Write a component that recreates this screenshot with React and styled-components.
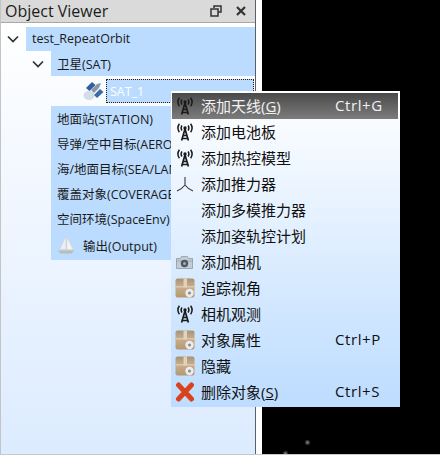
import React from "react"
import styled, { createGlobalStyle } from "styled-components"

const GlobalStyle = createGlobalStyle`
  html, body {
    margin: 0;
    padding: 0;
    background: #000;
  }
`

const FONT = `"Open Sans", "Noto Sans CJK SC", sans-serif`

const Page = styled.div`
  position: relative;
  display: flex;
  width: 440px;
  height: 455px;
  overflow: hidden;
  font-family: ${FONT};
  border-bottom: 1px solid #c8c8c8;
  box-sizing: border-box;
`

const Panel = styled.div`
  display: flex;
  flex-direction: column;
  width: 255px;
  border-left: 1px solid #c4c4c4;
  box-sizing: border-box;
`

const TitleBar = styled.div`
  display: flex;
  align-items: center;
  height: 23px;
  padding: 0 8px 0 4px;
  background: #dadada;
  border-bottom: 1px solid #a8a8a8;
  box-sizing: border-box;
`

const Title = styled.span`
  flex: 1;
  font-size: 16px;
  color: #1c1c1c;
`

const TitleButton = styled.svg`
  width: 12px;
  height: 12px;
  margin-left: 13px;
`

const Tree = styled.div`
  flex: 1;
  padding-top: 4px;
  background: linear-gradient(#ffffff, #dcebff);
`

const Row = styled.div`
  display: flex;
  align-items: center;
  height: ${(p) => p.$h || 25}px;
  margin-left: ${(p) => p.$indent}px;
  padding: 0 0 1px 6px;
  box-sizing: border-box;
  background: #bbdcff;
  font-size: 12.5px;
  color: #1a1a1a;
  white-space: nowrap;
`

const RowLabel = styled.span`
  margin-left: 8px;
`

const Chevron = styled.svg`
  position: absolute;
  left: ${(p) => p.$x}px;
  top: ${(p) => p.$y}px;
  width: 12px;
  height: 8px;
`

const SatRow = styled.div`
  display: flex;
  align-items: center;
  height: 30px;
  margin-left: 82px;
`

const SatLabel = styled.div`
  display: flex;
  align-items: center;
  width: 148px;
  height: 24px;
  margin-left: 2px;
  padding-left: 3px;
  border: 1px dotted #222;
  box-sizing: border-box;
  background: #bbdcff;
  color: #fff;
  font-size: 12.5px;
`

const Gap = styled.div`
  width: 7px;
  background: #fff;
  border-left: 1px solid #5a6068;
  box-sizing: border-box;
`

const Space = styled.div`
  position: relative;
  flex: 1;
  background: #000;
`

const Star = styled.div`
  position: absolute;
  left: ${(p) => p.$x - 3}px;
  top: ${(p) => p.$y - 3}px;
  width: 7px;
  height: 7px;
  background: radial-gradient(circle, #8e8e8e 0, #444 30%, transparent 65%);
`

const Menu = styled.div`
  position: absolute;
  left: 171px;
  top: 91px;
  width: 229px;
  height: 316px;
  padding: 2px 2px 2px 1px;
  box-sizing: border-box;
  background: linear-gradient(#ffffff, #bddcff);
`

const Item = styled.div`
  display: flex;
  align-items: center;
  height: 26px;
  color: ${(p) => (p.$active ? "#f2f2f2" : "#101010")};
  background: ${(p) => (p.$active ? "linear-gradient(#4a4a4a, #7c7c7c)" : "none")};
  font-size: 15px;
  white-space: nowrap;
`

const ItemIcon = styled.div`
  display: flex;
  align-items: center;
  justify-content: center;
  width: 29px;
  padding-right: 4px;
  box-sizing: border-box;
  flex: none;
`

const ItemLabel = styled.span`
  flex: 1;
  padding-bottom: 2px;
`

const Shortcut = styled.span`
  width: 63px;
  flex: none;
  padding-bottom: 2px;
  letter-spacing: 0.6px;
`

const Antenna = () => (
  <svg width="16" height="18" viewBox="0 0 16 18" fill="none" stroke="#1a1a1a" strokeWidth="1.5">
    <path d="M5 2.5 Q3.2 5 5 7.5M11 2.5 Q12.8 5 11 7.5M2.4 0.8 Q-0.6 5 2.4 9.2M13.6 0.8 Q16.6 5 13.6 9.2" />
    <circle cx="8" cy="5" r="1.7" fill="#1a1a1a" stroke="none" />
    <path d="M8 6 L4.6 17.5 M8 6 L11.4 17.5 M6 12.5 H10 M5.2 15.5 H10.8" strokeWidth="1.7" />
  </svg>
)

const Thruster = () => (
  <svg width="18" height="16" viewBox="0 0 18 16" fill="none" stroke="#3a3a3a" strokeWidth="1.1">
    <path d="M9 1 V9 M9 9 Q6 13 1 15 M9 9 Q12 13 17 15" />
  </svg>
)

const Camera = () => (
  <svg width="17" height="13" viewBox="0 0 17 13">
    <path d="M0.5 2.5 H4.5 L5.5 0.5 H11.5 L12.5 2.5 H16.5 V12.5 H0.5 Z" fill="#c4ccd6" stroke="#8f98a4" strokeWidth="0.8" />
    <path d="M0.5 5 H16.5" stroke="#8f98a4" strokeWidth="0.7" />
    <circle cx="8.5" cy="7.5" r="3.7" fill="#4e5661" />
    <circle cx="8.5" cy="7.5" r="1.5" fill="#a5adb8" />
  </svg>
)

const Box = () => (
  <svg width="20" height="20" viewBox="0 0 20 20">
    <defs>
      <linearGradient id="boxFill" x1="0" y1="0" x2="0" y2="1">
        <stop offset="0" stopColor="#a89378" />
        <stop offset="0.45" stopColor="#c9ae8c" />
        <stop offset="1" stopColor="#b29872" />
      </linearGradient>
    </defs>
    <rect x="0.5" y="0.5" width="19" height="19" rx="2" fill="url(#boxFill)" />
    <path d="M0.5 8 H19.5 V9.5 H0.5Z" fill="#dcc9ac" />
    <rect x="8.5" y="0.5" width="3.5" height="9" fill="#e0d2bc" />
    <circle cx="14.5" cy="15" r="4.2" fill="#ececec" />
    <circle cx="14.5" cy="15" r="1.6" fill="#8f8f8f" />
  </svg>
)

const DeleteX = () => (
  <svg width="20" height="20" viewBox="0 0 20 20" fill="none" stroke="#d8431b" strokeWidth="5" strokeLinecap="round">
    <path d="M3.5 3 L16.5 17 M16.5 3 L3.5 17" />
  </svg>
)

const Satellite = () => (
  <svg width="21" height="20" viewBox="0 0 21 20">
    <ellipse cx="6" cy="14.5" rx="5.5" ry="4.5" fill="#d3deeb" />
    <path d="M3 7 L9 1 L12.5 4 L6.5 10 Z" fill="#2f5f9e" />
    <path d="M11 14 L17 8 L20.5 11 L14 17 Z" fill="#3a6ba8" />
    <path d="M8 9 L14 3 L18 2 L16 7 L11 12 Z" fill="#8a97a6" />
  </svg>
)

const Sail = () => (
  <svg width="18" height="20" viewBox="0 0 18 20">
    <path d="M9 1 L9 14.5 L2.5 14.5 Z" fill="#eceef1" stroke="#c9cdd3" strokeWidth="0.5" />
    <path d="M10 2 L16 14.5 L10 14.5 Z" fill="#f6f4ec" stroke="#d4d3cb" strokeWidth="0.5" />
    <path d="M0.5 15.5 H17.5 L14.5 18.5 H3.5 Z" fill="#bcbcb6" />
  </svg>
)

const ChevronIcon = ({ x, y }) => (
  <Chevron $x={x} $y={y} viewBox="0 0 12 8" fill="none" stroke="#303030" strokeWidth="1.7">
    <path d="M1 1.5 L6 6.5 L11 1.5" />
  </Chevron>
)

const items = [
  { icon: <Antenna />, label: <>添加天线(<u>G</u>)</>, key: "Ctrl+G", active: true },
  { icon: <Antenna />, label: "添加电池板" },
  { icon: <Antenna />, label: "添加热控模型" },
  { icon: <Thruster />, label: "添加推力器" },
  { label: "添加多模推力器" },
  { label: "添加姿轨控计划" },
  { icon: <Camera />, label: "添加相机" },
  { icon: <Box />, label: "追踪视角" },
  { icon: <Antenna />, label: "相机观测" },
  { icon: <Box />, label: "对象属性", key: "Ctrl+P" },
  { icon: <Box />, label: "隐藏" },
  { icon: <DeleteX />, label: <>删除对象(<u>S</u>)</>, key: "Ctrl+S" },
]

const stars = [
  { x: 307, y: 442 },
  { x: 285, y: 453 },
]

export default function App() {
  return (
    <Page>
      <GlobalStyle />
      <Panel>
        <TitleBar>
          <Title>Object Viewer</Title>
          <TitleButton viewBox="0 0 12 12" fill="none" stroke="#333" strokeWidth="1.5">
            <path d="M4 3 V1 H11 V7 H8.5 M1 4 H8 V11 H1 Z" />
          </TitleButton>
          <TitleButton viewBox="0 0 12 12" fill="none" stroke="#333" strokeWidth="2.2">
            <path d="M2 2 L10 10 M10 2 L2 10" />
          </TitleButton>
        </TitleBar>
        <Tree>
          <Row $indent={25} $h={24}>test_RepeatOrbit</Row>
          <Row $indent={50}>卫星(SAT)</Row>
          <SatRow>
            <Satellite />
            <SatLabel>SAT_1</SatLabel>
          </SatRow>
          <Row $indent={50}>地面站(STATION)</Row>
          <Row $indent={50}>导弹/空中目标(AERO</Row>
          <Row $indent={50}>海/地面目标(SEA/LAN</Row>
          <Row $indent={50}>覆盖对象(COVERAGE</Row>
          <Row $indent={50}>空间环境(SpaceEnv)</Row>
          <Row $indent={50} $h={29}>
            <Sail />
            <RowLabel>输出(Output)</RowLabel>
          </Row>
        </Tree>
      </Panel>
      <Gap />
      <Space>
        {stars.map((s) => (
          <Star key={s.x} $x={s.x - 262} $y={s.y} />
        ))}
      </Space>
      <ChevronIcon x={7} y={35} />
      <ChevronIcon x={32} y={60} />
      <Menu>
        {items.map((it, i) => (
          <Item key={i} $active={it.active}>
            <ItemIcon>{it.icon}</ItemIcon>
            <ItemLabel>{it.label}</ItemLabel>
            {it.key && <Shortcut>{it.key}</Shortcut>}
          </Item>
        ))}
      </Menu>
    </Page>
  )
}
